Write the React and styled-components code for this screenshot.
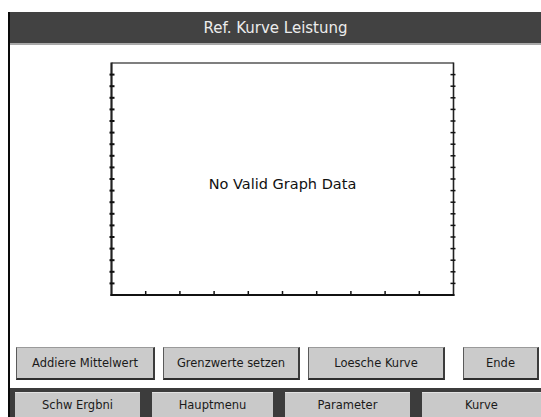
import React from 'react'
import styled, { createGlobalStyle } from 'styled-components'

const GlobalStyle = createGlobalStyle`
  html, body {
    margin: 0;
    padding: 0;
    background: #fff;
  }
  body {
    font-family: "DejaVu Sans", "Liberation Sans", sans-serif;
  }
`

const GRAPH_W = 345
const GRAPH_H = 234

function Axes() {
  const left = 1.5
  const right = GRAPH_W - 1.5
  const bottom = GRAPH_H - 1
  const yTicks = []
  for (let i = 1; i < 20; i++) {
    const y = 1 + (i * (bottom - 1)) / 20
    yTicks.push(
      <g key={'y' + i}>
        <line x1={-0.5} x2={4.5} y1={y} y2={y} stroke="#111" strokeWidth="2" />
        <line x1={right - 3} x2={right + 2} y1={y} y2={y} stroke="#111" strokeWidth="1.5" />
      </g>
    )
  }
  const xTicks = []
  for (let i = 1; i < 10; i++) {
    const x = left + (i * (right - left)) / 10
    xTicks.push(<line key={'x' + i} x1={x} x2={x} y1={bottom - 4} y2={bottom} stroke="#111" strokeWidth="1.5" />)
  }
  return (
    <AxisSvg width={GRAPH_W} height={GRAPH_H} viewBox={`0 0 ${GRAPH_W} ${GRAPH_H}`}>
      <line x1={left} x2={right} y1={1} y2={1} stroke="#555" strokeWidth="1.5" />
      <line x1={left} x2={left} y1={0.5} y2={bottom + 1} stroke="#222" strokeWidth="2.2" />
      <line x1={right} x2={right} y1={0.5} y2={bottom + 1} stroke="#222" strokeWidth="1.6" />
      <line x1={left - 1} x2={right + 1} y1={bottom} y2={bottom} stroke="#111" strokeWidth="2.2" />
      {yTicks}
      {xTicks}
    </AxisSvg>
  )
}

export default function App() {
  return (
    <Page>
      <GlobalStyle />
      <Screen>
        <TitleBar>Ref. Kurve Leistung</TitleBar>
        <PlotArea>
          <Graph>
            <Axes />
            <Message>No Valid Graph Data</Message>
          </Graph>
        </PlotArea>
        <ButtonRow>
          <Button $w={139}>Addiere Mittelwert</Button>
          <Button $w={137}>Grenzwerte setzen</Button>
          <Button $w={137}>Loesche Kurve</Button>
          <Button $w={76} $push={10}>Ende</Button>
        </ButtonRow>
        <TabBar>
          <Tab $w={125}>Schw Ergbni</Tab>
          <Tab $w={121}>Hauptmenu</Tab>
          <Tab $w={125}>Parameter</Tab>
          <Tab $grow>Kurve</Tab>
        </TabBar>
      </Screen>
    </Page>
  )
}

const Page = styled.div`
  width: 541px;
  height: 417px;
  background: #fff;
  padding-top: 12px;
  box-sizing: border-box;
  overflow: hidden;
`

const Screen = styled.div`
  margin-left: 8px;
  height: 405px;
  border-left: 2px solid #0a0a0a;
  display: flex;
  flex-direction: column;
`

const TitleBar = styled.div`
  height: 31px;
  background: #424242;
  border-bottom: 2px solid #a8a8a8;
  color: #ececec;
  font-size: 15px;
  display: flex;
  align-items: center;
  justify-content: center;
`

const PlotArea = styled.div`
  padding: 17px 0 0 100px;
`

const Graph = styled.div`
  position: relative;
  width: ${GRAPH_W}px;
  height: ${GRAPH_H}px;
  display: flex;
  align-items: center;
  justify-content: center;
`

const AxisSvg = styled.svg`
  position: absolute;
  left: 0;
  top: 0;
  overflow: visible;
`

const Message = styled.div`
  position: relative;
  font-size: 14.5px;
  color: #111;
  margin-top: 10px;
`

const ButtonRow = styled.div`
  margin-top: 51px;
  height: 33px;
  padding-left: 6px;
  display: flex;
  gap: 8px;
`

const Button = styled.div`
  box-sizing: border-box;
  width: ${(p) => p.$w}px;
  margin-left: ${(p) => p.$push || 0}px;
  height: 33px;
  background: #cbcbcb;
  border: 1px solid #5a5a5a;
  border-top-color: #9a9a9a;
  border-right: 2px solid #3c3c3c;
  border-bottom: 2px solid #2e2e2e;
  color: #1a1a1a;
  font-size: 11.5px;
  display: flex;
  align-items: center;
  justify-content: center;
  white-space: nowrap;
`

const TabBar = styled.div`
  margin-top: 8px;
  flex: 1;
  background: #3c3c3c;
  padding: 4px 0 0 5px;
  display: flex;
  gap: 12px;
`

const Tab = styled.div`
  box-sizing: border-box;
  width: ${(p) => (p.$w ? p.$w + 'px' : 'auto')};
  flex: ${(p) => (p.$grow ? 1 : 'none')};
  background: #c9c9c9;
  border-top: 1px solid #e2e2e2;
  color: #1a1a1a;
  font-size: 11.5px;
  display: flex;
  align-items: center;
  justify-content: center;
`
